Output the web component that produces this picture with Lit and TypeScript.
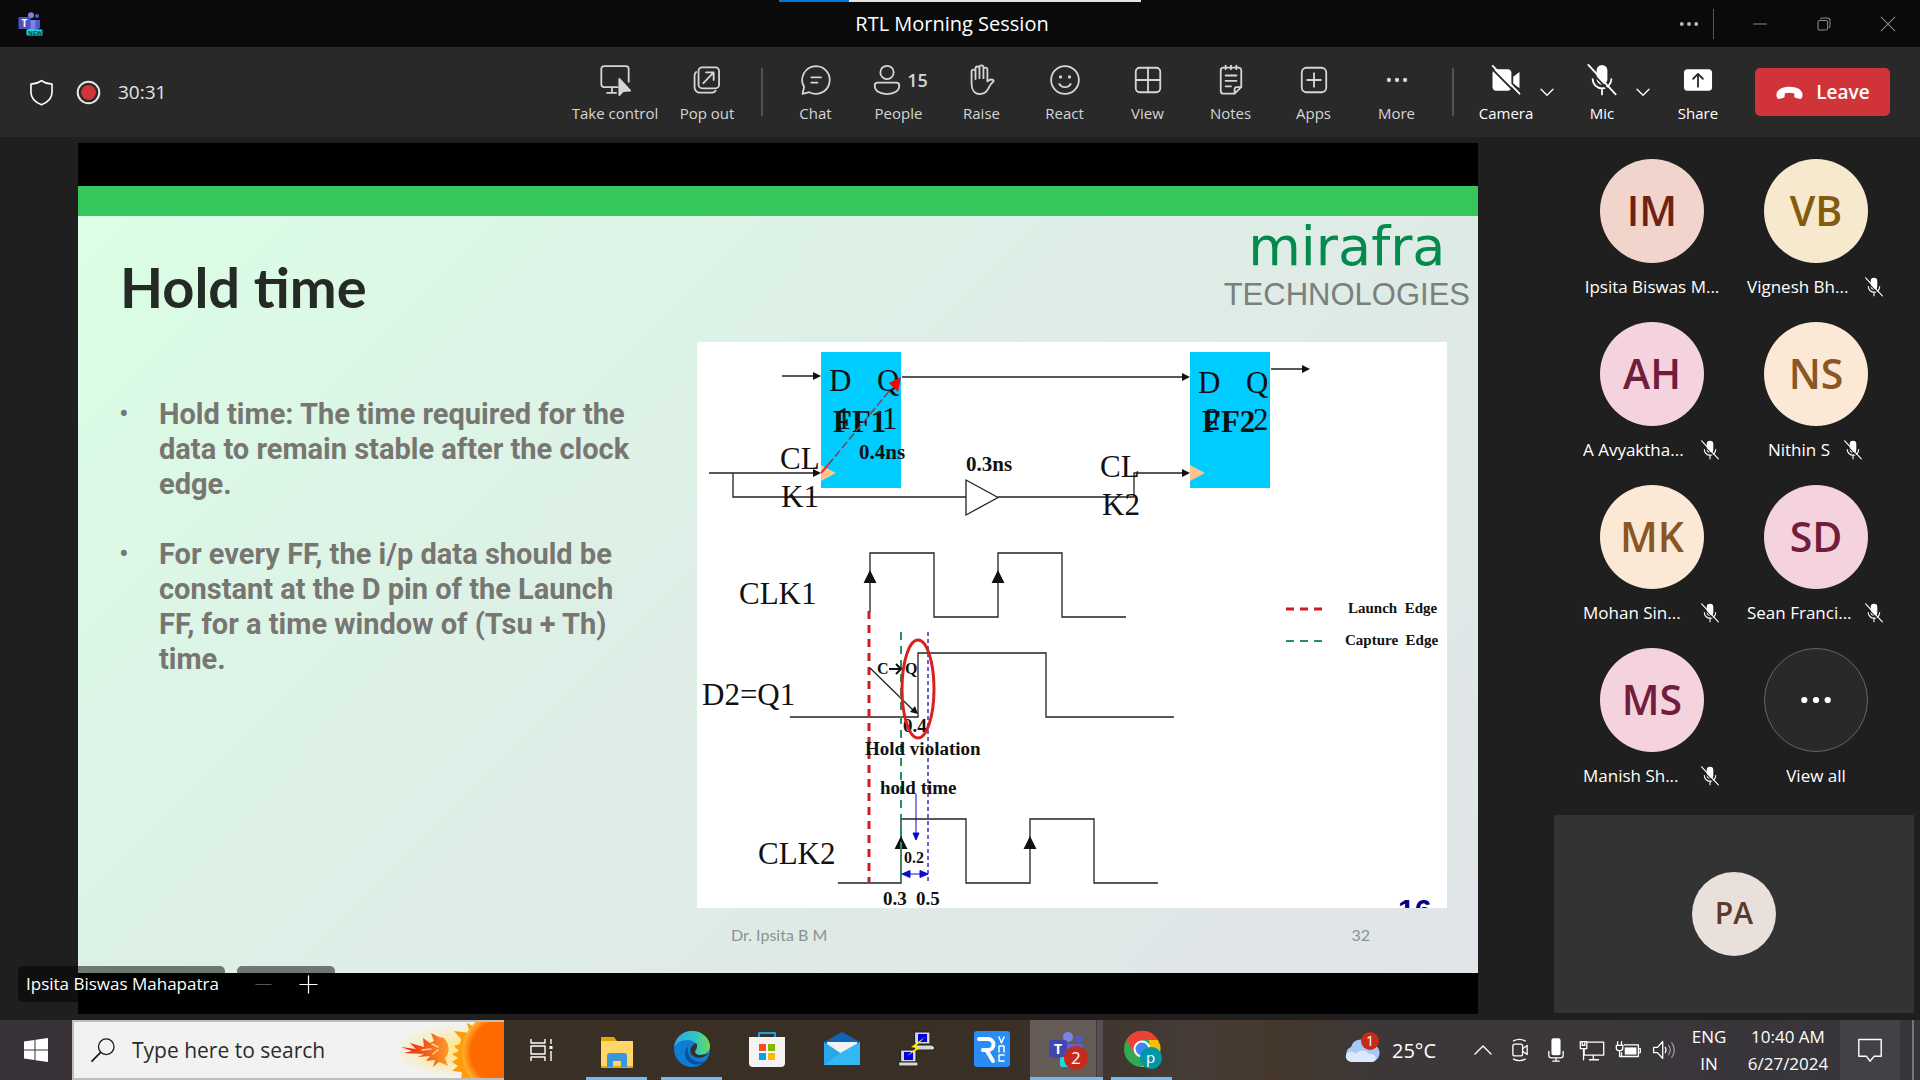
import { LitElement, html, svg, css, TemplateResult } from "lit";
import { customElement } from "lit/decorators.js";
import { classMap } from "lit/directives/class-map.js";

type Icon = TemplateResult;

const icon = (body: unknown, size = 20): Icon => html`
  <svg class="icon" viewBox="0 0 ${size} ${size}" aria-hidden="true">${body}</svg>`;

const micOff = svg`
  <path d="M10 1.6a3 3 0 0 1 3 3v5a3 3 0 0 1-6 0v-5a3 3 0 0 1 3-3z" fill="currentColor" stroke="none"/>
  <path d="M4.8 9.5a5.2 5.2 0 0 0 10.4 0M10 14.8V18"/>
  <path d="M1.6 3L16.6 19" stroke="var(--cut)" />
  <path d="M2.4 1.6L17.6 18"/>`;

const ICONS = {
  control: icon(svg`
    <path d="M11.5 14H4a1.6 1.6 0 0 1-1.6-1.6V3.9A1.6 1.6 0 0 1 4 2.3h12a1.6 1.6 0 0 1 1.6 1.6V11M8.3 14v3M5.6 17.2h5"/>
    <path d="M12.4 9.4v9l2.2-2.3 3.8-.2z" fill="currentColor"/>`),
  popout: icon(svg`
    <rect x="5.3" y="3" width="11.4" height="11.6" rx="2"/>
    <path d="M4 5.5c-.7.5-.9 1-.9 1.900V14a3 3 0 0 0 3 3h6.600c.9 0 1.700-.3 2.100-1M8 11.800l5.700-6M9.500 5.800h4.200v4.200"/>`),
  chat: icon(svg`
    <path d="M10 2.300a7.700 7.700 0 1 1-3.700 14.500L2.500 17.700l.9-3.800A7.700 7.700 0 0 1 10 2.300z"/>
    <path d="M7.400 8.500h5.400M7.400 11.500h3.400"/>`),
  people: icon(svg`
    <circle cx="10" cy="5.800" r="3.700"/>
    <path d="M4.800 11.500h10.400c.9 0 1.600.7 1.600 1.500 0 3-2.800 4.800-6.800 4.800s-6.800-1.800-6.800-4.800c0-.8.700-1.500 1.600-1.500z"/>`),
  raise: icon(svg`
    <path d="M4.200 12V5.300a1.100 1.100 0 0 1 2.200 0V9.500M6.400 9V3.600a1.100 1.100 0 0 1 2.200 0V9M8.600 9V3a1.100 1.100 0 0 1 2.200 0v6M10.800 9V4.200a1.100 1.100 0 0 1 2.200 0v6.600c1-.9 2-1.500 3.200-.8.4.3.3.7 0 1-1.700 1.200-2.200 3-3.200 4.600-1 1.600-2.300 2.200-4.200 2.200-2.800 0-4.600-2.300-4.600-5.800"/>`),
  react: icon(svg`
    <circle cx="10" cy="10" r="7.700"/>
    <path d="M6.800 12.200c1.500 2.300 4.900 2.300 6.400 0"/>
    <circle cx="7.500" cy="8.300" r=".9" class="solid"/><circle cx="12.500" cy="8.300" r=".9" class="solid"/>`),
  view: icon(svg`<rect x="3.200" y="3.200" width="13.600" height="13.600" rx="2.200"/><path d="M10 3.200v13.600M3.200 10h13.600"/>`),
  notes: icon(svg`
    <path d="M12 17.600H5.800a1.500 1.500 0 0 1-1.500-1.500V4.600a1.500 1.500 0 0 1 1.500-1.500h8.400a1.500 1.500 0 0 1 1.500 1.500V14zM12 17.600v-2.300c0-.8.600-1.300 1.300-1.300h2.400M7 2v2M10 2v2M13 2v2M7 7.500h6M7 10.500h6M7 13.500h3"/>`),
  apps: icon(svg`<rect x="3.200" y="3.200" width="13.600" height="13.600" rx="2.600"/><path d="M10 6.200v7.600M6.200 10h7.600"/>`),
  more: icon(svg`<g class="solid"><circle cx="5.500" cy="10" r="1.200"/><circle cx="10" cy="10" r="1.200"/><circle cx="14.500" cy="10" r="1.200"/></g>`),
  camera: icon(svg`
    <rect x="2.500" y="4" width="10.500" height="12" rx="2.200" class="solid"/>
    <path d="M14 8.200l3.500-2.600v9L14 11.900z" class="solid"/>
    <path d="M1.800 3.400L16.600 18.400" stroke="var(--cut)"/><path d="M2.600 2.200L17.500 17.600"/>`),
  mic: icon(micOff),
  share: icon(svg`
    <rect x="2.200" y="4" width="15.600" height="12" rx="2" class="solid"/>
    <path d="M10 13.700V6.800M7.300 9.300L10 6.600l2.700 2.700" stroke="var(--cut)"/>`),
  chevron: icon(svg`<path d="M2.500 6.500l7.500 7.500 7.500-7.500" stroke-width="1.600"/>`),
  shield: icon(svg`<path d="M10 1.200c2.300 1.700 4.700 2.500 7.800 2.600v6c0 4.400-3 7.400-7.800 9.200-4.800-1.800-7.800-4.800-7.800-9.200v-6c3.100-.1 5.500-.9 7.800-2.600z" stroke-width="1.200"/>`),
  record: icon(svg`<circle cx="10" cy="10" r="8" stroke-width="1.500"/><circle cx="10" cy="10" r="5.500" fill="#d13438" stroke="none"/>`),
  phone: icon(svg`<path d="M1 11.600C1 8 5 6 10 6s9 2 9 5.600c0 1.500-.4 2.800-1.600 2.800l-2.900-.6c-.9-.2-1.200-.8-1.200-1.600v-1.500c-2-.8-4.600-.8-6.600 0v1.500c0 .8-.3 1.400-1.200 1.600l-2.900.6C1.400 14.400 1 13.100 1 11.600z" class="solid"/>`),
  minus: icon(svg`<path d="M2 10h16" stroke-width="1.300"/>`),
  plus: icon(svg`<path d="M1 10h18M10 1v18" stroke-width="1.300"/>`),
  restore: icon(svg`<rect x="2.500" y="5.500" width="12" height="12" rx="2" stroke-width="1.300"/><path d="M5.500 3.500c.5-.7 1-1 2-1H14a3.500 3.500 0 0 1 3.500 3.500v6.500c0 1-.3 1.500-1 2" stroke-width="1.300"/>`),
  close: icon(svg`<path d="M1.500 1.500l17 17M18.500 1.500l-17 17" stroke-width="1.300"/>`),
  teams: icon(svg`
    <circle cx="12.500" cy="3.300" r="3" fill="#7b83eb"/><circle cx="18.500" cy="4" r="2.100" fill="#5059c9"/>
    <path d="M15 8h6.500v6a4 4 0 0 1-4 4H15z" fill="#5059c9"/>
    <path d="M8 8h9v7a5 5 0 0 1-5 5c-3 0-4-3-4-5z" fill="#7b83eb"/>
    <rect x="0" y="5" width="12" height="12" rx="1" fill="#4b53bc"/>
    <text x="3" y="14.500" font-size="10" font-weight="700" fill="#fff">T</text>
    <rect x="8" y="17.500" width="16" height="6" rx="1" fill="#1fd9d9"/>
    <text x="9.500" y="23" font-size="6" font-weight="700" fill="#06343a">NEW</text>`, 24),
};

interface Tool { label: string; icon: Icon; count?: number }

const SHARE_TOOLS: Tool[] = [
  { label: "Take control", icon: ICONS.control },
  { label: "Pop out", icon: ICONS.popout },
];
const MEETING_TOOLS: Tool[] = [
  { label: "Chat", icon: ICONS.chat },
  { label: "People", icon: ICONS.people, count: 15 },
  { label: "Raise", icon: ICONS.raise },
  { label: "React", icon: ICONS.react },
  { label: "View", icon: ICONS.view },
  { label: "Notes", icon: ICONS.notes },
  { label: "Apps", icon: ICONS.apps },
  { label: "More", icon: ICONS.more },
];

const iconRules = css`
  * { box-sizing: border-box; }
  button { font: inherit; color: inherit; background: none; border: 0; padding: 0; }
  .icon { display: block; fill: none; stroke: currentColor; stroke-width: 1; stroke-linecap: round; stroke-linejoin: round; flex: none; }
  .icon text { stroke: none; font-family: "Open Sans", sans-serif; }
  .icon .solid { fill: currentColor; stroke: none; }
`;

@customElement("title-bar")
class TitleBar extends LitElement {
  static styles = [iconRules, css`
    :host { display: grid; grid-template-columns: 1fr auto 1fr; align-items: center; height: 47px; background: #0a0a0a; color: #fff; position: relative; }
    .progress { position: absolute; top: 0; left: 779px; display: flex; width: 362px; height: 2px; background: #e3e3e3; }
    .done { width: 70px; background: #0078d4; }
    .brand { padding-left: 18px; }
    .brand .icon { width: 25px; height: 24px; stroke: none; }
    h1 { margin: 0 16px 0 0; font-size: 20px; font-weight: 400; line-height: 28px; }
    .window { display: flex; justify-content: flex-end; align-items: center; color: #8a8a8a; }
    .window button { width: 64px; height: 47px; display: grid; place-items: center; }
    .window .icon { width: 16px; height: 16px; }
    .window .menu { width: 48px; color: #bbb; }
    .menu .icon { width: 32px; height: 32px; }
    .rule { width: 1px; height: 30px; margin-right: 14px; background: #555; }
  `];
  render() {
    return html`
      <div class="progress"><span class="done"></span></div>
      <div class="brand">${ICONS.teams}</div>
      <h1>RTL Morning Session</h1>
      <div class="window">
        <button class="menu" aria-label="More options">${ICONS.more}</button>
        <span class="rule"></span>
        <button aria-label="Minimize">${ICONS.minus}</button>
        <button aria-label="Restore">${ICONS.restore}</button>
        <button aria-label="Close">${ICONS.close}</button>
      </div>`;
  }
}

@customElement("meeting-toolbar")
class MeetingToolbar extends LitElement {
  static styles = [iconRules, css`
    :host { --cut: #292929; display: flex; align-items: center; justify-content: space-between; height: 90px; padding: 0 30px 0 28px; background: #292929; color: #d6d6d6; }
    .status, .tools { display: flex; align-items: center; }
    .status { gap: 20px; color: #e6e6e6; }
    .status .icon { width: 27px; height: 27px; }
    .status .time { font-size: 19px; line-height: 24px; margin-left: -4px; }
    .shield { color: #fff; }
    .tool { display: flex; flex-direction: column; align-items: center; gap: 5px; width: 83px; font-size: 15px; line-height: 20px; white-space: nowrap; }
    .tool .icon { width: 36px; height: 36px; }
    .glyph { display: flex; align-items: center; gap: 2px; }
    .count { font-size: 18px; font-weight: 600; }
    .share { display: flex; }
    .share .tool:first-child { width: 104px; }
    .share .tool { width: 80px; }
    .rule { width: 2px; height: 48px; margin: 0 11px 0 14px; background: #525252; }
    .rule.wide { margin-right: 19px; }
    .device { display: flex; color: #fff; margin-right: 14px; align-items: center; }
    .device .tool { width: 66px; }
    .arrow { width: 16px; height: 40px; display: grid; place-items: center; }
    .arrow .icon { width: 16px; height: 16px; }
    .device.last { margin-right: 24px; }
    .leave { display: flex; align-items: center; justify-content: center; gap: 12px; width: 135px; height: 48px; border-radius: 5px; background: #d13438; color: #fff; font-size: 19px; font-weight: 600; }
    .leave .icon { width: 29px; height: 29px; }
  `];
  tool(t: Tool) {
    return html`<button class="tool">
      <span class="glyph">${t.icon}${t.count ? html`<span class="count">${t.count}</span>` : ""}</span>
      <span>${t.label}</span></button>`;
  }
  render() {
    return html`
      <div class="status">
        <span class="shield">${ICONS.shield}</span>
        <span>${ICONS.record}</span>
        <span class="time">30:31</span>
      </div>
      <div class="tools">
        <div class="share">${SHARE_TOOLS.map((t) => this.tool(t))}</div>
        <span class="rule"></span>
        ${MEETING_TOOLS.map((t) => this.tool(t))}
        <span class="rule wide"></span>
        <div class="device">${this.tool({ label: "Camera", icon: ICONS.camera })}
          <button class="arrow" aria-label="Camera options">${ICONS.chevron}</button></div>
        <div class="device">${this.tool({ label: "Mic", icon: ICONS.mic })}
          <button class="arrow" aria-label="Mic options">${ICONS.chevron}</button></div>
        <div class="device last">${this.tool({ label: "Share", icon: ICONS.share })}</div>
        <button class="leave">${ICONS.phone}<span>Leave</span></button>
      </div>`;
  }
}

@customElement("timing-diagram")
class TimingDiagram extends LitElement {
  static styles = css`
    :host { display: block; }
    .art { display: block; width: 100%; height: auto; background: #fff; overflow: hidden; font-family: "Liberation Serif", serif; fill: #111; }
    .wire { fill: none; stroke: #222; stroke-width: 1.3; }
    .head { fill: #111; }
    .name { font-size: 31px; }
    .bold { font-weight: 700; }
    .delay { font-size: 21px; font-weight: 700; }
    .note { font-size: 19px; font-weight: 700; }
    .small { font-size: 16px; font-weight: 700; }
    .legend { font-size: 15px; font-weight: 700; white-space: pre; }
    .launch { fill: none; stroke: #cc1f24; stroke-width: 3; stroke-dasharray: 8 6; }
    .capture { fill: none; stroke: #2c8f63; stroke-width: 2; stroke-dasharray: 8 6; }
    .window { fill: none; stroke: #3a30c0; stroke-width: 1.5; stroke-dasharray: 4 3; }
    .flop { fill: #00ccff; }
    .pin { fill: #fdc48f; }
    .blue { fill: #0a0acd; stroke: #0a0acd; }
    .page { font: 700 30px "Liberation Sans", sans-serif; fill: #000080; }
  `;
  render() {
    return html`<svg class="art" viewBox="0 0 750 566" role="img" aria-label="Hold time circuit and waveforms">
      <rect class="flop" x="124" y="10" width="80" height="136"/>
      <rect class="flop" x="493" y="10" width="80" height="136"/>
      <path class="pin" d="M124 123l15 8-15 8zM493 123l15 8-15 8z"/>
      <path class="wire" d="M85 34H118M205 35H488M574 27H607M12 131H118M36 131V155H269M301 155H437V131H488M269 138V173L301 155.500z"/>
      <path class="head" d="M124 34l-8-4v8zM493 35l-8-4v8zM613 27l-8-4v8zM124 131l-8-4v8zM493 131l-8-4v8z"/>
      <text class="name" x="132" y="49">D</text><text class="name" x="180" y="49">Q</text>
      <text class="name" x="139" y="87">1</text><text class="name" x="185" y="87">1</text>
      <text class="name bold" x="136" y="90">FF1</text>
      <text class="name" x="501" y="51">D</text><text class="name" x="549" y="51">Q</text>
      <text class="name" x="508" y="88">2</text><text class="name" x="556" y="88">2</text>
      <text class="name bold" x="505" y="90">FF2</text>
      <path d="M131 123L194 47" fill="none" stroke="#75484f" stroke-width="1.500" stroke-dasharray="8 3"/>
      <path d="M124 131l8-9" fill="none" stroke="#f03020" stroke-width="2"/>
      <path d="M204 35l-12 6 9 9z" fill="#f00"/>
      <text class="delay" x="162" y="117">0.4ns</text>
      <text class="delay" x="269" y="129">0.3ns</text>
      <text class="name" x="83" y="127">CL</text><text class="name" x="84" y="165">K1</text>
      <text class="name" x="403" y="135">CL</text><text class="name" x="405" y="173">K2</text>

      <text class="name" x="42" y="262">CLK1</text>
      <text class="name" x="5" y="363">D2=Q1</text>
      <text class="name" x="61" y="522">CLK2</text>
      <path class="wire" d="M173 270V211H237V275H301V211H365V275H429"/>
      <path class="wire" d="M93 375H221V311H349V375H477"/>
      <path class="wire" d="M141 541H204V477H269V541H333V477H397V541H461"/>
      <path class="head" d="M173 228l6.500 13h-13zM301 228l6.500 13h-13zM204 494l6.500 13h-13zM333 494l6.500 13h-13z"/>

      <path class="launch" d="M172 269V540"/>
      <path class="capture" d="M204 290V541"/>
      <path class="window" d="M231 290V541"/>
      <path class="wire" d="M173 326L216 368"/>
      <path class="head" d="M221 372l-8-2 5-6z"/>
      <text class="small" x="180" y="332">C</text><text class="small" x="208" y="332">Q</text>
      <path d="M192 327H203M199 322l5 5-5 5" fill="none" stroke="#111" stroke-width="2"/>
      <text class="note" x="206" y="390">0.4</text>
      <ellipse cx="221" cy="347" rx="16" ry="49" fill="none" stroke="#d8201f" stroke-width="3"/>
      <text class="note" x="168" y="413">Hold violation</text>
      <text class="note" x="183" y="452">hold time</text>
      <path class="blue" d="M219 452V492M219 498l-3-7h6zM210 532H226M205 532l8-3.500v7zM231 532l-8-3.500v7z"/>
      <text class="small" x="207" y="521">0.2</text>
      <text class="note" x="186" y="563">0.3</text><text class="note" x="219" y="563">0.5</text>

      <path class="launch" d="M589 267H626"/>
      <path class="capture" d="M589 299H626"/>
      <text class="legend" x="651" y="271">Launch  Edge</text>
      <text class="legend" x="648" y="303">Capture  Edge</text>
      <text class="page" x="701" y="578">16</text>
    </svg>`;
  }
}

@customElement("lecture-slide")
class LectureSlide extends LitElement {
  static styles = css`
    * { box-sizing: border-box; }
    :host { display: flex; flex-direction: column; aspect-ratio: 16 / 9; background: linear-gradient(135deg, #dbffe4 0%, #dcf6e6 22%, #deeee6 48%, #dfe9e7 72%, #e1e4e9 100%); border-top: 30px solid #36c75c; }
    .head { display: flex; justify-content: space-between; flex: 0 0 126px; padding: 0 8px 0 42px; }
    h2 { margin: 37px 0 0; font: 700 56px/68px Lato, sans-serif; color: #262a26; }
    .logo { display: flex; flex-direction: column; align-items: center; padding-top: 3px; }
    .mark { font: 400 54px/56px "DejaVu Sans", sans-serif; color: #048a4c; }
    .sub { font: 400 31px/40px "Liberation Sans", sans-serif; color: #7b807d; }
    .body { display: grid; grid-template-columns: 619fr 750fr; padding-right: 31px; }
    ul { margin: 0; padding: 55px 50px 0 81px; list-style: none; font: 700 29px/35px Roboto, sans-serif; color: #777671; }
    li { position: relative; margin-bottom: 35px; }
    li::before { content: "•"; position: absolute; left: -40px; font-weight: 400; }
    .foot { display: flex; justify-content: space-between; flex: 1; padding: 15px 108px 0 653px; font: 400 16px/24px Lato, sans-serif; color: #8b9390; }
  `;
  render() {
    return html`
      <div class="head">
        <h2>Hold time</h2>
        <div class="logo"><span class="mark">mirafra</span><span class="sub">TECHNOLOGIES</span></div>
      </div>
      <div class="body">
        <ul>
          <li>Hold time: The time required for the data to remain stable after the clock edge.</li>
          <li>For every FF, the i/p data should be constant at the D pin of the Launch FF, for a time window of (Tsu + Th) time.</li>
        </ul>
        <timing-diagram></timing-diagram>
      </div>
      <div class="foot"><span>Dr. Ipsita B M</span><span>32</span></div>`;
  }
}

interface Person { initials: string; name: string; tone: string; muted: boolean; long: boolean }

const PEOPLE: Person[] = [
  { initials: "IM", name: "Ipsita Biswas M...", tone: "rust", muted: false, long: false },
  { initials: "VB", name: "Vignesh Bh...", tone: "gold", muted: true, long: true },
  { initials: "AH", name: "A Avyaktha...", tone: "plum", muted: true, long: true },
  { initials: "NS", name: "Nithin S", tone: "amber", muted: true, long: false },
  { initials: "MK", name: "Mohan Sin...", tone: "amber", muted: true, long: true },
  { initials: "SD", name: "Sean Franci...", tone: "plum", muted: true, long: true },
  { initials: "MS", name: "Manish Sh...", tone: "plum", muted: true, long: true },
];

@customElement("people-rail")
class PeopleRail extends LitElement {
  static styles = [iconRules, css`
    :host { --cut: #1f1f1f; display: flex; flex-direction: column; justify-content: space-between; padding: 22px 6px 7px 76px; color: #fff; }
    .grid { display: grid; grid-template-columns: 164px 164px; grid-auto-rows: 163px; justify-content: center; }
    .person { display: flex; flex-direction: column; align-items: center; gap: 12px; }
    .avatar { display: grid; place-items: center; width: 104px; height: 104px; border-radius: 50%; font-size: 41px; line-height: 54px; padding-bottom: 2px; font-weight: 600; }
    .rust { background: #f1d5cd; color: #6d2310; }
    .gold { background: #f7e9cd; color: #835b10; }
    .plum { background: #f4d3df; color: #711d3b; }
    .amber { background: #fce9d5; color: #8a5624; }
    .all { background: #292929; border: 1px solid #666; padding: 0; }
    .all .icon { width: 52px; height: 52px; }
    .label { display: flex; align-items: center; gap: 12px; font-size: 17px; line-height: 24px; white-space: nowrap; }
    .long { width: 104px; }
    .label .icon { width: 22px; height: 22px; }
    .self { display: grid; place-items: center; height: 198px; background: #333; }
    .self .avatar { width: 84px; height: 84px; font-size: 30px; background: #e9dfdb; color: #5a3a2a; }
  `];
  render() {
    return html`
      <div class="grid">
        ${PEOPLE.map((p) => html`
          <div class="person">
            <div class="avatar ${p.tone}">${p.initials}</div>
            <div class="label"><span class=${classMap({ long: p.long })}>${p.name}</span>${p.muted ? ICONS.mic : ""}</div>
          </div>`)}
        <button class="person">
          <span class="avatar all">${ICONS.more}</span>
          <span class="label">View all</span>
        </button>
      </div>
      <div class="self"><div class="avatar">PA</div></div>`;
  }
}

interface App { name: string; art: unknown; open?: boolean; active?: boolean }

const APPS: App[] = [
  { name: "File Explorer", open: true, art: svg`
    <path d="M2 6h13l3 4h16v27H2z" fill="#e5a50a"/><rect x="2" y="10" width="32" height="25" rx="1" fill="#ffd766"/>
    <path d="M8 36V25a3 3 0 0 1 3-3h14a3 3 0 0 1 3 3v11h-6v-6h-8v6z" fill="#3a96dd"/>` },
  { name: "Microsoft Edge", open: true, art: svg`
    <defs><linearGradient id="eg" x1="0" x2="1"><stop offset="0" stop-color="#2aa9e8"/><stop offset=".6" stop-color="#2fc6c0"/><stop offset="1" stop-color="#6fdc50"/></linearGradient></defs>
    <circle cx="18" cy="18" r="18" fill="#0c7cd5"/>
    <path d="M0 17C1 6 9 0 18 0c11 0 18 8 18 15 0 6-5 9-10 9-4 0-5-2-5-3 0-1 2-2 2-5 0-4-4-7-9-7C7 9 2 12 0 17z" fill="url(#eg)"/>
    <path d="M14 15c-4 4-4 12 1 16 5 4 13 3 17-1-8 3-17-1-18-9 0-3 0-4 0-6z" fill="#0b4f9e"/>
    <path d="M22 12c2 2 1 4 0 6-2 2-1 6 4 6 4 0 6-1 8-2-4 6-12 6-16 2-3-3-2-9 4-12z" fill="#3a2f25"/>` },
  { name: "Microsoft Store", art: svg`
    <path d="M10 9V2h16v7" fill="none" stroke="#1ba1e2" stroke-width="2"/>
    <path d="M0 6h36v26a4 4 0 0 1-4 4H4a4 4 0 0 1-4-4z" fill="#f3f3f3"/>
    <path d="M10 13h7v7h-7z" fill="#f25022"/><path d="M19 13h7v7h-7z" fill="#7fba00"/>
    <path d="M10 22h7v7h-7z" fill="#00a4ef"/><path d="M19 22h7v7h-7z" fill="#ffb900"/>` },
  { name: "Mail", art: svg`
    <path d="M0 11L18 1l18 10v6H0z" fill="#0f64b5"/><path d="M3 11h30v12H3z" fill="#f2f2f2"/>
    <path d="M0 11l18 12L36 11v23H0z" fill="#28a8ea"/><path d="M0 34l18-13L36 11v23z" fill="#35b8f2"/>` },
  { name: "PuTTY", art: svg`
    <g stroke="#222" stroke-width="1"><rect x="16" y="1" width="15" height="12" fill="#d6d6d6"/><path d="M15 14h18l3 3-2 2H17z" fill="#d6d6d6"/>
    <rect x="2" y="19" width="15" height="12" fill="#d6d6d6"/><path d="M0 31h19v4H0z" fill="#d6d6d6"/></g>
    <rect x="19" y="3" width="9" height="8" fill="#0000e0"/><rect x="5" y="21" width="9" height="8" fill="#0000e0"/>
    <path d="M26 6L12 16l5 1-9 8 13-8-4-2z" fill="#ffee00"/>` },
  { name: "RealVNC Viewer", art: svg`
    <rect width="36" height="36" rx="3" fill="#2a8cf5"/>
    <path d="M5 8h9a5 5 0 0 1 0 11H9M13 20l6 10" fill="none" stroke="#fff" stroke-width="4"/>
    <path d="M25 6l2.500 6L30 6M25 21v-6h5v6M30 24h-5v6h5" fill="none" stroke="#fff" stroke-width="1.500"/>` },
  { name: "Microsoft Teams", open: true, active: true, art: svg`
    <circle cx="19" cy="6" r="5" fill="#7b83eb"/><circle cx="30" cy="8" r="3.500" fill="#5059c9"/>
    <path d="M16 13h18v8a6 6 0 0 1-6 6H16z" fill="#5b63d3"/><rect x="0" y="9" width="18" height="18" rx="2" fill="#4048b0"/>
    <text x="5" y="23" font-size="14" font-weight="700" fill="#fff">T</text>
    <rect x="11" y="26" width="12" height="10" rx="2" fill="#1fd9d9"/>
    <circle cx="27" cy="27" r="12" fill="#c42b1c"/><text x="22" y="33" font-size="17" fill="#fff">2</text>` },
  { name: "Google Chrome", open: true, art: svg`
    <circle cx="18" cy="18" r="18" fill="#34a853"/><path d="M2.500 9A18 18 0 0 1 34 9H18l-7.800 13.500z" fill="#ea4335"/>
    <path d="M34 9a18 18 0 0 1-16 27l8-13.500L25 9z" fill="#fbbc05"/>
    <circle cx="18" cy="18" r="8.500" fill="#fff"/><circle cx="18" cy="18" r="6.500" fill="#4285f4"/>
    <circle cx="27" cy="27" r="11" fill="#0097a7"/><text x="22" y="32" font-size="15" fill="#fff">p</text>` },
];

@customElement("task-bar")
class TaskBar extends LitElement {
  static styles = [iconRules, css`
    :host { display: flex; justify-content: space-between; height: 60px; color: #fff; background: linear-gradient(90deg, #38323a 0, #3a3026 26%, #3a2f25 52%, #453b37 62%, #46382d 66%, #3c3738 72%, #37353c 100%); }
    .side { display: flex; align-items: stretch; }
    .cell { width: 75px; display: grid; place-items: center; border-bottom: 3px solid transparent; }
    .cell .icon { width: 36px; height: 36px; stroke: none; overflow: visible; }
    .open { border-bottom-color: #76b9ed; width: 61px; margin: 0 7px; }
    .active { background: linear-gradient(90deg, #655c57 66px, #443a33 66px, #443a33 67px, #55504f 67px); width: 73px; margin: 0 1px; }
    .start { width: 72px; display: grid; place-items: center; }
    .start .icon, .task .icon { width: 24px; height: 24px; }
    .task { width: 75px; display: grid; place-items: center; }
    .search { display: flex; align-items: center; width: 432px; background: #f2f2f2; border: 2px solid #bdbdbd; border-right: 0; color: #1b1b1b; overflow: hidden; }
    .search > .icon { width: 26px; height: 26px; margin: 0 16px; }
    input { flex: 1; min-width: 0; border: 0; outline: 0; padding: 0; background: none; font: 400 21px/30px "Open Sans", sans-serif; color: #222; }
    input::placeholder { color: #2b2b2b; opacity: 1; }
    .search .burst { width: 112px; height: 60px; margin: 0; stroke: none; }
    .tray button, .tray .weather { display: flex; align-items: center; justify-content: center; }
    .weather .icon { width: 38px; height: 38px; stroke: none; }
    .weather { gap: 11px; font-size: 20px; margin-right: 28px; }
    .tray .s { width: 36px; }
    .tray .s .icon { width: 26px; height: 26px; }
    .up .icon { width: 20px; height: 20px; }
    .up { width: 38px; }
    .text { font-size: 17px; line-height: 27px; flex-direction: column; text-align: center; }
    .lang { width: 54px; }
    .clock { width: 104px; }
    .bell { width: 60px; background: #434148; }
    .bell .icon { width: 28px; height: 28px; }
    .edge { width: 20px; padding-left: 12px; }
    .edge span { display: block; width: 2px; height: 60px; background: #77757b; }
  `];
  render() {
    return html`
      <div class="side">
        <button class="start" aria-label="Start">${icon(svg`<path class="solid" d="M0 3.500l10.500-1.500v9.500H0zM11.500 1.800L24 0v11.500H11.500zM0 12.500h10.500V22L0 20.500zM11.500 12.500H24V24l-12.500-1.800z"/>`, 24)}</button>
        <label class="search">
          ${icon(svg`<circle cx="12.500" cy="7.500" r="6"/><path d="M8.200 11.800L1.500 18.500" stroke-width="1.300"/>`)}
          <input type="text" aria-label="Search" placeholder="Type here to search" />
          <svg class="icon burst" viewBox="0 0 112 60" aria-hidden="true">
            <defs>
              <radialGradient id="glow"><stop offset=".3" stop-color="#fbe99a"/><stop offset="1" stop-color="#f2f2f2"/></radialGradient>
              <radialGradient id="sun"><stop offset=".78" stop-color="#ff6a00"/><stop offset="1" stop-color="#ffb52e"/></radialGradient>
              <linearGradient id="flame"><stop offset="0" stop-color="#f01d0a"/><stop offset=".5" stop-color="#f2551c"/><stop offset="1" stop-color="#ff9d2a"/></linearGradient>
            </defs>
            <ellipse cx="64" cy="31" rx="62" ry="27" fill="url(#glow)"/>
            <path d="M112 0H86l-3 7-8-4 3 10-16-2 7 8-1 5-6 2 5 5-7 3 6 4-6 4 6 4-6 5 10 1-1 8h43z" fill="#ff9d0a"/>
            <circle cx="110" cy="32" r="40" fill="url(#sun)"/>
            <path d="M9 27L24 29 18 23l14 4-1-9 7 5 4-2-3-8 8 4 5 1c6 6 6 16 1 20l3 8-9-4-6 5 2-7-9 1 4-5-12 1 6-3-20-1 8-2z" fill="url(#flame)"/>
            <path d="M30 30l9-1M41 34l5-4M40 24l6 3" fill="none" stroke="#ffd98a" stroke-width="1.500"/>
          </svg>
        </label>
        <button class="task" aria-label="Task View">${icon(svg`<path d="M1 1v4h14V1M1 23v-4h14v4M1 8h14v8H1zM21 1v5M21 13v10" stroke-linecap="butt" stroke-width="1.400"/><rect class="solid" x="19.500" y="8" width="3" height="3"/>`, 24)}</button>
        ${APPS.map((a) => html`<button class=${classMap({ cell: true, open: !!a.open, active: !!a.active })} aria-label=${a.name}>${icon(a.art, 36)}</button>`)}
      </div>
      <div class="side tray">
        <div class="weather">${icon(svg`
          <path d="M9 31a8 8 0 0 1-1-15 10 10 0 0 1 18-3 9 9 0 0 1 3 18z" fill="#a9c7f7"/><path d="M8 31c-6-1-7-8-2-10 4-1 6 1 7 2 2-4 9-5 13 0 8-1 9 7 3 8z" fill="#dbe8fd"/>
          <circle cx="27" cy="10" r="9" fill="#c42b1c"/><text x="23" y="15" font-size="14" fill="#fff">1</text>`, 38)}<span>25°C</span></div>
        <button class="up" aria-label="Show hidden icons">${icon(svg`<path d="M2 14l8-8 8 8" stroke-width="1.400"/>`)}</button>
        <button class="s" aria-label="Meet Now">${icon(svg`<rect x="4.500" y="5.500" width="7.500" height="9" rx="1.500"/><path d="M12 9l3.500-2.500v7L12 11M5 3c3-1.500 6-1.500 9 0M5 17c3 1.500 6 1.500 9 0"/>`)}</button>
        <button class="s" aria-label="Microphone in use">${icon(svg`<rect class="solid" x="6.500" y="1" width="7" height="13" rx="1.500"/><path d="M4.500 11v3a2 2 0 0 0 2 2h7a2 2 0 0 0 2-2v-3M10 16v2.500M7.500 18.500h5"/>`)}</button>
        <button class="s" aria-label="Network">${icon(svg`<path d="M6 4h13v10H4V9M1 3.500h5V9H1zM2.500 3.500V6.500h2V3.500M3.500 9v8.500M11 14v3M8 17.500h7"/>`)}</button>
        <button class="s" aria-label="Battery">${icon(svg`<path d="M7 6h11v9H5v-3M18 9h1.500v3H18M2 3.500v3M5 3.500v3M1 6.500h5v2a2 2 0 0 1-2 2H3a2 2 0 0 1-2-2zM3.500 10.500V15H5"/><rect class="solid" x="7.500" y="8" width="9" height="5.500"/>`)}</button>
        <button class="s" aria-label="Volume">${icon(svg`<path d="M2 8h3l4-4.500v13L5 12H2zM11 8c.8 1.300.8 2.700 0 4"/><path d="M13.500 6.500c1.700 2.200 1.700 4.800 0 7M16 4.500c2.500 3.300 2.500 7.700 0 11" opacity=".5"/>`)}</button>
        <button class="text lang"><span>ENG</span><span>IN</span></button>
        <button class="text clock"><span>10:40 AM</span><span>6/27/2024</span></button>
        <button class="bell" aria-label="Notifications">${icon(svg`<path d="M2 2.500h16v12h-5L10 18l-2.500-3.500H2z"/>`)}</button>
        <div class="edge"><span></span></div>
      </div>`;
  }
}

@customElement("app-root")
class AppRoot extends LitElement {
  static styles = [iconRules, css`
    :host { display: flex; flex-direction: column; min-height: 100vh; background: #1f1f1f; font-family: "Open Sans", "Noto Sans", sans-serif; }
    main { flex: 1; display: grid; grid-template-columns: minmax(0, 1fr) 442px; position: relative; }
    .stage { display: flex; flex-direction: column; justify-content: center; margin: 6px 0 6px 78px; padding-top: 2px; background: #000; }
    .overlay { position: absolute; left: 18px; bottom: 18px; display: flex; gap: 12px; color: #fff; font-size: 17px; line-height: 36px; }
    .chip { padding: 0 6px 0 8px; border-radius: 5px; background: rgba(0, 0, 0, 0.5); }
    .zoom { display: flex; align-items: center; justify-content: space-between; width: 98px; padding: 0 17px; }
    .zoom .icon { width: 19px; height: 19px; }
    .dim { color: #555; }
  `];
  render() {
    return html`
      <title-bar></title-bar>
      <meeting-toolbar></meeting-toolbar>
      <main>
        <section class="stage"><lecture-slide></lecture-slide></section>
        <people-rail></people-rail>
        <div class="overlay">
          <span class="chip">Ipsita Biswas Mahapatra</span>
          <span class="chip zoom">
            <button class="dim" aria-label="Zoom out">${ICONS.minus}</button>
            <button aria-label="Zoom in">${ICONS.plus}</button>
          </span>
        </div>
      </main>
      <task-bar></task-bar>`;
  }
}
